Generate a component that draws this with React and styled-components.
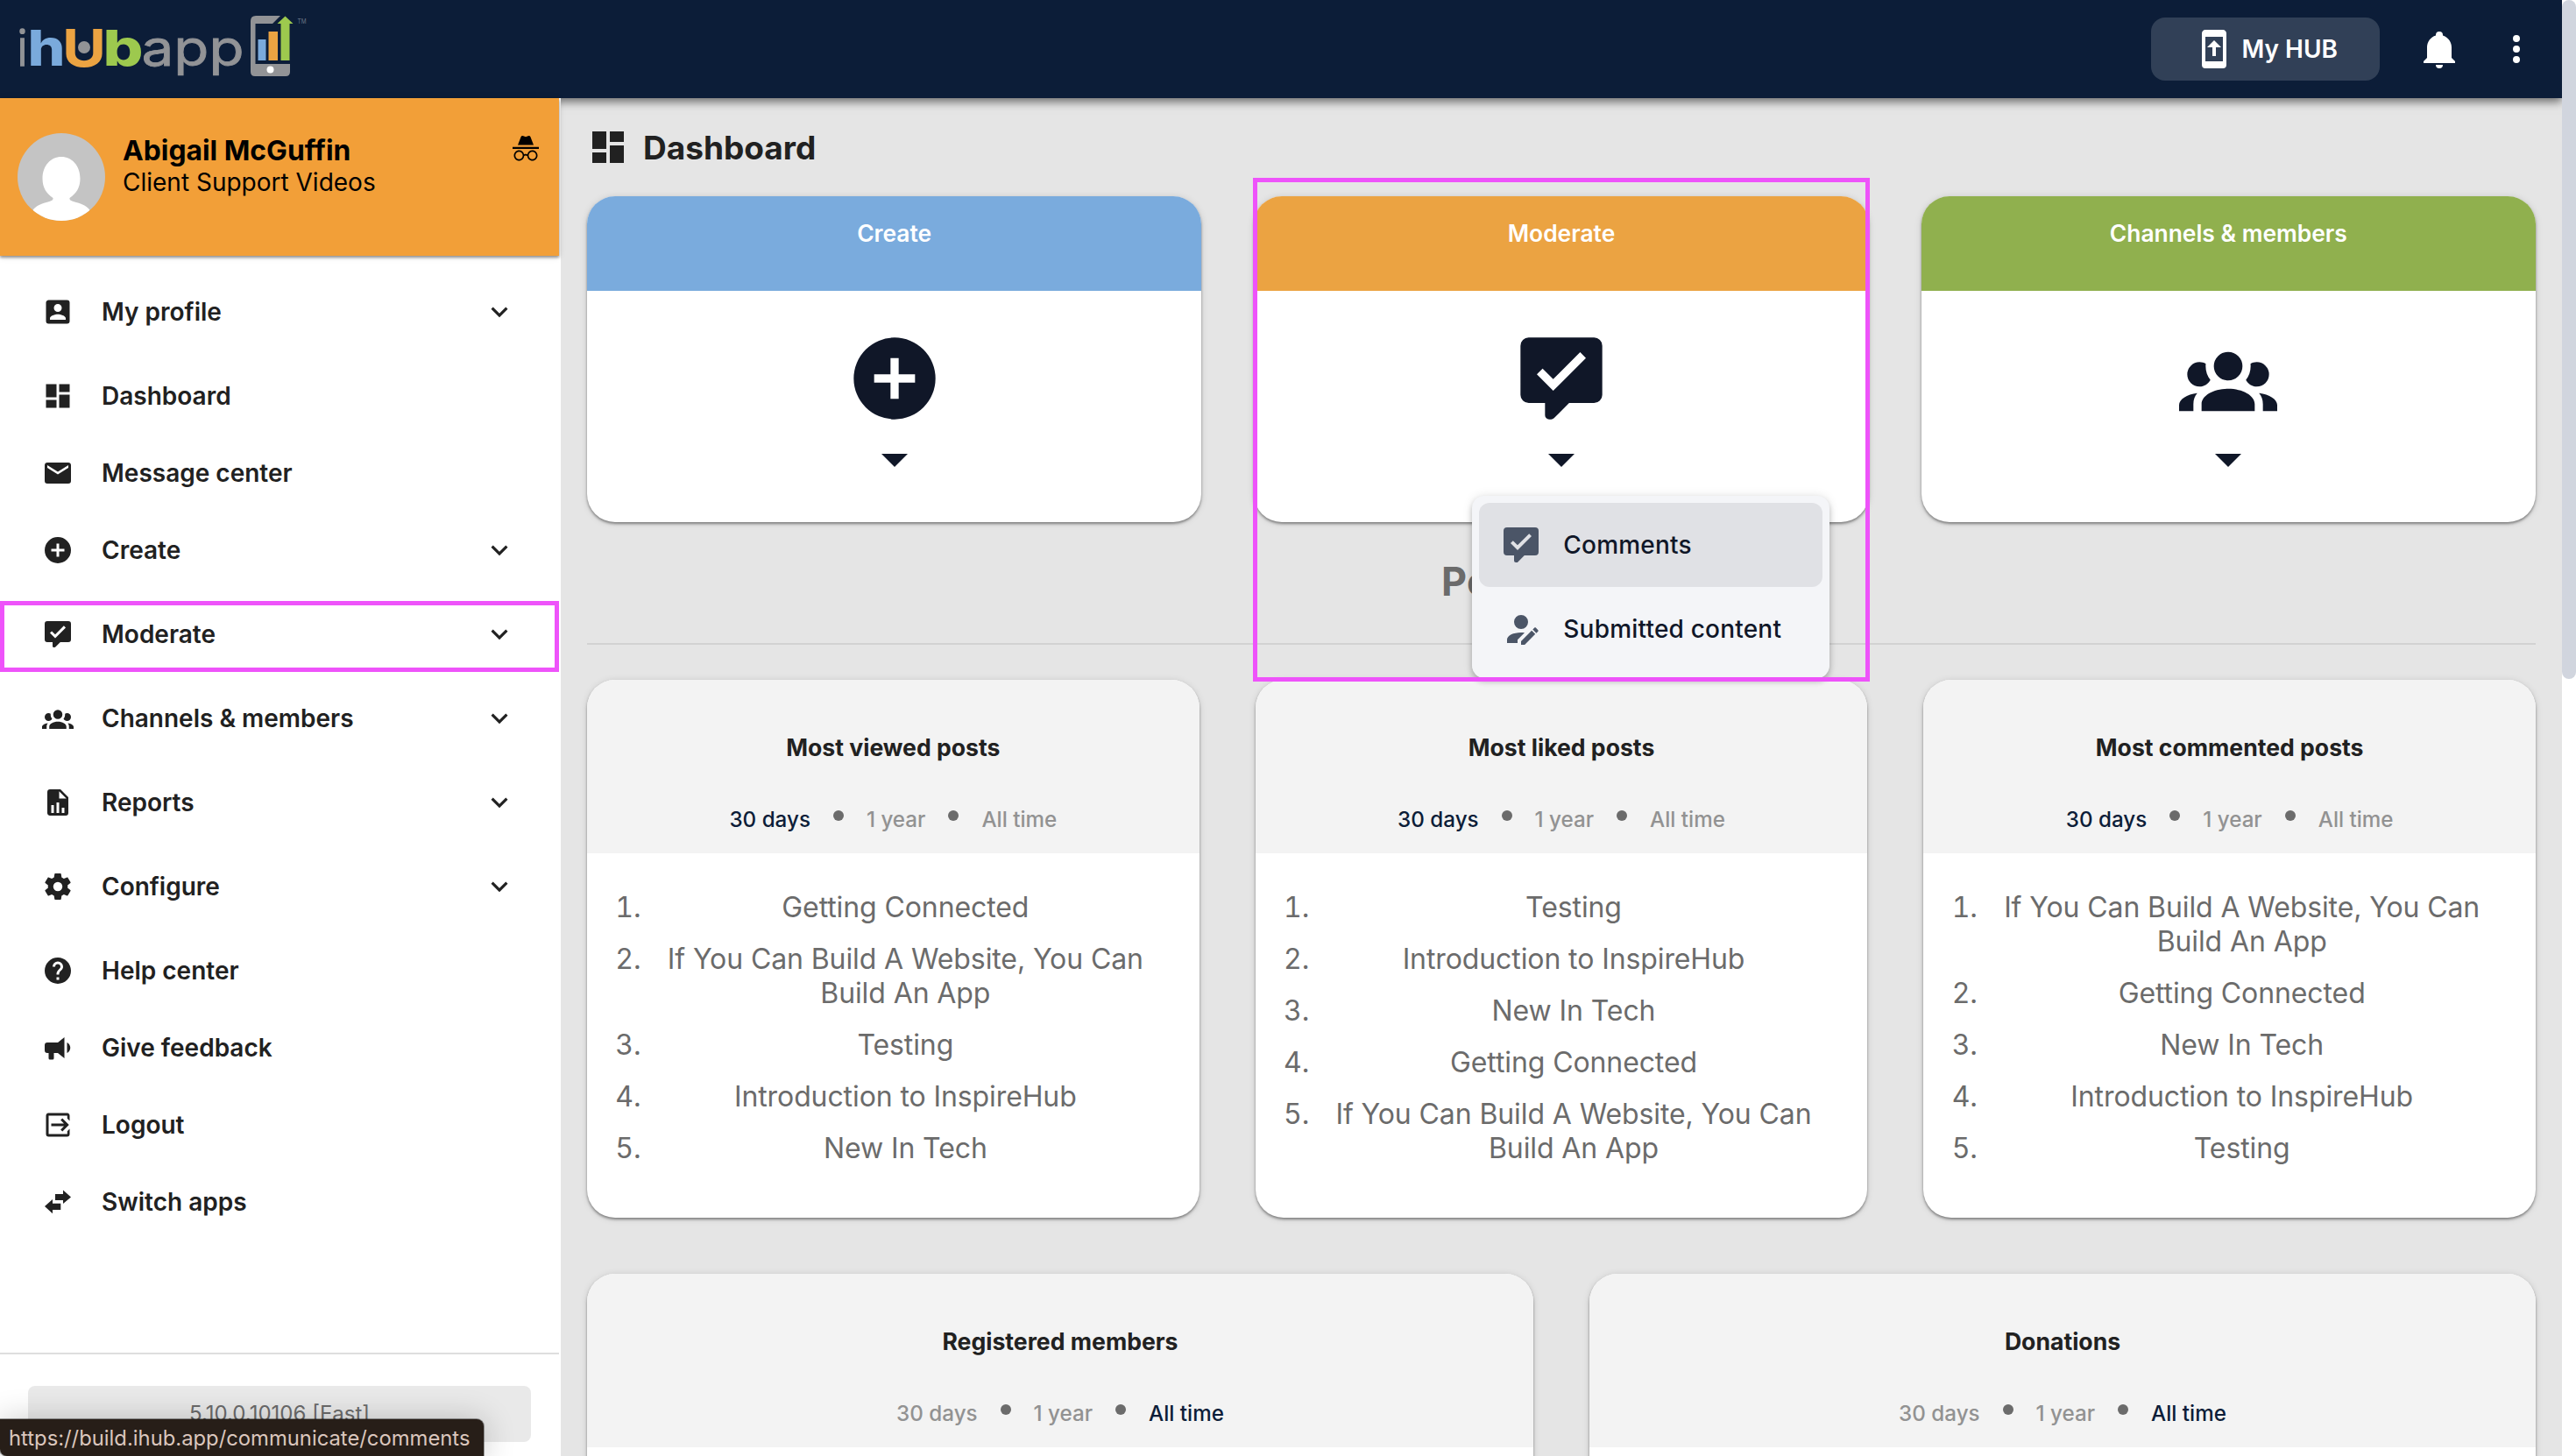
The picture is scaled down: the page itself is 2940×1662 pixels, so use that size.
import styled, { createGlobalStyle, css } from "styled-components";

const GlobalStyle = createGlobalStyle`
  * {
    box-sizing: border-box;
    margin: 0;
    padding: 0;
  }
  body {
    font-family: Inter, "Liberation Sans", sans-serif;
    font-size: 32px;
    color: #212121;
    overflow: hidden;
  }
`;

const icons = {
  account: "M19 3H5C3.9 3 3 3.9 3 5V19A2 2 0 0 0 5 21H19A2 2 0 0 0 21 19V5A2 2 0 0 0 19 3M6 17C6 15 10 13.9 12 13.9S18 15 18 17V18H6M15 9A3 3 0 0 1 12 12A3 3 0 0 1 9 9A3 3 0 0 1 12 6A3 3 0 0 1 15 9Z",
  dashboard: "M13 3V9H21V3M13 21H21V11H13M3 21H11V15H3M3 13H11V3H3V13Z",
  mail: "M20 8L12 13L4 8V6L12 11L20 6M20 4H4C2.89 4 2 4.89 2 6V18A2 2 0 0 0 4 20H20A2 2 0 0 0 22 18V6C22 4.89 21.1 4 20 4Z",
  plus: "M17 13H13V17H11V13H7V11H11V7H13V11H17M12 2A10 10 0 0 0 2 12A10 10 0 0 0 12 22A10 10 0 0 0 22 12A10 10 0 0 0 12 2Z",
  commentCheck: "M20 2H4A2 2 0 0 0 2 4V16A2 2 0 0 0 4 18H8V21A1 1 0 0 0 9 22H9.5C9.75 22 10 21.9 10.2 21.71L13.9 18H20A2 2 0 0 0 22 16V4A2 2 0 0 0 20 2M10 15L6 11L7.41 9.59L10 12.17L16.59 5.58L18 7L10 15Z",
  group: "M12 5.5A3.5 3.5 0 0 1 15.5 9A3.5 3.5 0 0 1 12 12.5A3.5 3.5 0 0 1 8.5 9A3.5 3.5 0 0 1 12 5.5M5 8C5.56 8 6.08 8.15 6.53 8.42C6.38 9.85 6.8 11.27 7.66 12.38C7.16 13.34 6.16 14 5 14A3 3 0 0 1 2 11A3 3 0 0 1 5 8M19 8A3 3 0 0 1 22 11A3 3 0 0 1 19 14C17.84 14 16.84 13.34 16.34 12.38C17.2 11.27 17.62 9.85 17.47 8.42C17.92 8.15 18.44 8 19 8M5.5 18.25C5.5 16.18 8.41 14.5 12 14.5C15.59 14.5 18.5 16.18 18.5 18.25V20H5.5V18.25M0 20V18.5C0 17.11 1.89 15.94 4.45 15.6C3.86 16.28 3.5 17.22 3.5 18.25V20H0M24 20H20.5V18.25C20.5 17.22 20.14 16.28 19.55 15.6C22.11 15.94 24 17.11 24 18.5V20Z",
  report: "M13 9H18.5L13 3.5V9M6 2H14L20 8V20A2 2 0 0 1 18 22H6C4.89 22 4 21.1 4 20V4C4 2.89 4.89 2 6 2M7 20H9V14H7V20M11 20H13V12H11V20M15 20H17V16H15V20Z",
  cog: "M12 15.5A3.5 3.5 0 0 1 8.5 12A3.5 3.5 0 0 1 12 8.5A3.5 3.5 0 0 1 15.5 12A3.5 3.5 0 0 1 12 15.5M19.43 12.97C19.47 12.65 19.5 12.33 19.5 12C19.5 11.67 19.47 11.34 19.43 11L21.54 9.37C21.73 9.22 21.78 8.95 21.66 8.73L19.66 5.27C19.54 5.05 19.27 4.96 19.05 5.05L16.56 6.05C16.04 5.66 15.5 5.32 14.87 5.07L14.5 2.42C14.46 2.18 14.25 2 14 2H10C9.75 2 9.54 2.18 9.5 2.42L9.13 5.07C8.5 5.32 7.96 5.66 7.44 6.05L4.95 5.05C4.73 4.96 4.46 5.05 4.34 5.27L2.34 8.73C2.21 8.95 2.27 9.22 2.46 9.37L4.57 11C4.53 11.34 4.5 11.67 4.5 12C4.5 12.33 4.53 12.65 4.57 12.97L2.46 14.63C2.27 14.78 2.21 15.05 2.34 15.27L4.34 18.73C4.46 18.95 4.73 19.03 4.95 18.95L7.44 17.94C7.96 18.34 8.5 18.68 9.13 18.93L9.5 21.58C9.54 21.82 9.75 22 10 22H14C14.25 22 14.46 21.82 14.5 21.58L14.87 18.93C15.5 18.67 16.04 18.34 16.56 17.94L19.05 18.95C19.27 19.03 19.54 18.95 19.66 18.73L21.66 15.27C21.78 15.05 21.73 14.78 21.54 14.63L19.43 12.97Z",
  help: "M15.07 11.25L14.17 12.17C13.45 12.89 13 13.5 13 15H11V14.5C11 13.39 11.45 12.39 12.17 11.67L13.41 10.41C13.78 10.05 14 9.55 14 9C14 7.89 13.1 7 12 7A2 2 0 0 0 10 9H8A4 4 0 0 1 12 5A4 4 0 0 1 16 9C16 9.88 15.64 10.67 15.07 11.25M13 19H11V17H13M12 2A10 10 0 0 0 2 12A10 10 0 0 0 12 22A10 10 0 0 0 22 12C22 6.47 17.5 2 12 2Z",
  bullhorn: "M12 8H4A2 2 0 0 0 2 10V14A2 2 0 0 0 4 16H5V20A1 1 0 0 0 6 21H8A1 1 0 0 0 9 20V16H12L17 20V4L12 8M21.5 12C21.5 13.71 20.54 15.26 19 16V8C20.53 8.75 21.5 10.3 21.5 12Z",
  logout: "M19 3H5C3.89 3 3 3.89 3 5V19A2 2 0 0 0 5 21H19A2 2 0 0 0 21 19V15L19.2 16.8V19H5V5H19.2V7.2L21 9V5C21 3.89 20.1 3 19 3M15.5 17L20.5 12L15.5 7L14.09 8.41L16.67 11H7V13H16.67L14.09 15.59L15.5 17Z",
  swap: "M16 3L22 8.25L16 13.25V10.7H10V6H16V3M8 10L2 15.25L8 20.75V18H14.2V13.2H8V10Z",
  chevron: "M7.41 8.58L12 13.17L16.59 8.58L18 10L12 16L6 10L7.41 8.58Z",
  caret: "M7 10L12 15L17 10H7Z",
  accountEdit: "M21.7 13.35L20.7 14.35L18.65 12.3L19.65 11.3C19.86 11.09 20.21 11.09 20.42 11.3L21.7 12.58C21.91 12.79 21.91 13.14 21.7 13.35M12 18.94L18.06 12.88L20.11 14.93L14.06 21H12V18.94M12 14C7.58 14 4 15.79 4 18V20H10V18.11L14 14.11C13.34 14.03 12.67 14 12 14M12 4A4 4 0 0 0 8 8A4 4 0 0 0 12 12A4 4 0 0 0 16 8A4 4 0 0 0 12 4Z",
  incognito: "M17.06 13C15.2 13 13.64 14.33 13.24 16.1C12.29 15.69 11.42 15.8 10.76 16.09C10.35 14.31 8.79 13 6.94 13C4.77 13 3 14.79 3 17C3 19.21 4.77 21 6.94 21C9 21 10.68 19.38 10.84 17.32C11.18 17.08 12.07 16.63 13.16 17.34C13.34 19.39 15 21 17.06 21C19.23 21 21 19.21 21 17C21 14.79 19.23 13 17.06 13M6.94 19.86C5.38 19.86 4.13 18.58 4.13 17S5.39 14.14 6.94 14.14C8.5 14.14 9.75 15.42 9.75 17S8.5 19.86 6.94 19.86M17.06 19.86C15.5 19.86 14.25 18.58 14.25 17S15.5 14.14 17.06 14.14C18.62 14.14 19.88 15.42 19.88 17S18.61 19.86 17.06 19.86M22 10.5H2V12H22V10.5M15.53 2.63C15.31 2.14 14.75 1.88 14.22 2.05L12 2.79L9.77 2.05L9.72 2.04C9.19 1.89 8.63 2.17 8.43 2.68L6 9H18L15.56 2.68L15.53 2.63Z",
  phone: "M17 1H7C5.89 1 5 1.89 5 3V21A2 2 0 0 0 7 23H17A2 2 0 0 0 19 21V3C19 1.89 18.1 1 17 1M17 19H7V5H17V19M16 11L12 7L8 11H11V16H13V11H16Z",
  bell: "M21 19V20H3V19L5 17V11C5 7.9 7.03 5.17 10 4.29C10 4.19 10 4.1 10 4A2 2 0 0 1 12 2A2 2 0 0 1 14 4C14 4.1 14 4.19 14 4.29C16.97 5.17 19 7.9 19 11V17L21 19M14 21A2 2 0 0 1 12 23A2 2 0 0 1 10 21",
  dots: "M12 16A2 2 0 0 1 14 18A2 2 0 0 1 12 20A2 2 0 0 1 10 18A2 2 0 0 1 12 16M12 10A2 2 0 0 1 14 12A2 2 0 0 1 12 14A2 2 0 0 1 10 12A2 2 0 0 1 12 10M12 4A2 2 0 0 1 14 6A2 2 0 0 1 12 8A2 2 0 0 1 10 6A2 2 0 0 1 12 4Z",
};

const Svg = styled.svg`
  width: ${(p) => p.$size}px;
  height: ${(p) => p.$size}px;
  flex: none;
  display: block;
  fill: ${(p) => p.$color || "currentColor"};
`;

const Icon = ({ name, size = 36, color }) => (
  <Svg viewBox="0 0 24 24" $size={size} $color={color}>
    <path d={icons[name]} fillRule="evenodd" />
  </Svg>
);

const Screen = styled.div`
  width: 2940px;
  height: 1662px;
  display: flex;
  position: relative;
  overflow: hidden;
  background: #fff;
`;

const Page = styled.div`
  flex: 1;
  display: flex;
  flex-direction: column;
  overflow: hidden;
  background: #e5e5e5;
`;

const ScrollTrack = styled.div`
  width: 16px;
  background: #fff;
`;

const ScrollThumb = styled.div`
  height: 775px;
  border-radius: 8px;
  background: #d1d5de;
`;

const shadow = css`
  box-shadow: 0 2px 3px rgba(0, 0, 0, 0.4), 0 1px 8px rgba(0, 0, 0, 0.12);
`;

/* ---------- top bar ---------- */

const TopBar = styled.header`
  height: 112px;
  flex: none;
  display: flex;
  align-items: center;
  padding: 0 28px 0 10px;
  color: #fff;
  background: #0c1d38;
  box-shadow: 0 4px 10px rgba(0, 0, 0, 0.55);
  position: relative;
  z-index: 1;
`;

const Logo = styled.svg`
  width: 350px;
  height: 112px;
  margin-right: auto;
  font-family: Inter, sans-serif;
`;

const HubButton = styled.button`
  height: 72px;
  display: flex;
  align-items: center;
  gap: 7px;
  padding: 0 48px;
  margin-right: 44px;
  border: 0;
  border-radius: 16px;
  background: #314057;
  color: #fff;
  font: 600 28px Inter, sans-serif;
`;

const BarIcon = styled.div`
  margin-left: ${(p) => p.$gap || 0}px;
`;

/* ---------- sidebar ---------- */

const Columns = styled.div`
  flex: 1;
  display: flex;
  min-height: 0;
`;

const Sidebar = styled.aside`
  width: 640px;
  flex: none;
  display: flex;
  flex-direction: column;
  padding-right: 2px;
  background: #fff;
  position: relative;
  z-index: 2;
`;

const Profile = styled.div`
  height: 180px;
  flex: none;
  display: flex;
  align-items: flex-start;
  gap: 20px;
  padding: 40px 20px;
  background: #f29f38;
  color: #000;
  ${shadow}
`;

const Avatar = styled.svg`
  width: 100px;
  height: 100px;
  border-radius: 50%;
  background: #c4c4c4;
`;

const Who = styled.div`
  flex: 1;
`;

const Name = styled.h1`
  padding-top: 1px;
  font-size: 31.8px;
  line-height: 38px;
  font-weight: 700;
`;

const AppName = styled.p`
  font-size: 28px;
  line-height: 34px;
`;

const Nav = styled.nav`
  flex: 1;
  padding-top: 20px;
`;

const NavItem = styled.div`
  height: 88px;
  display: flex;
  align-items: center;
  gap: 32px;
  padding: 0 49px 0 48px;
  margin-bottom: ${(p) => (p.$expandable ? 8 : 0)}px;
  position: relative;
`;

const NavLabel = styled.span`
  flex: 1;
  font-size: 28px;
  font-weight: 600;
`;

const SideFooter = styled.footer`
  height: 118px;
  padding: 36px 32px 0;
  border-top: 2px solid #dedede;
`;

const Version = styled.div`
  height: 64px;
  display: flex;
  align-items: center;
  justify-content: center;
  padding-bottom: 2px;
  border-radius: 8px;
  background: #e9e9e9;
  color: #6b6b6b;
  font-size: 24px;
`;

const StatusUrl = styled.div`
  position: absolute;
  left: 0;
  bottom: 0;
  z-index: 5;
  height: 42px;
  width: 552px;
  padding-left: 10px;
  line-height: 44px;
  border-radius: 0 8px 0 8px;
  background: #271e18;
  color: #dac6bd;
  font-size: 23.8px;
  white-space: nowrap;
  box-shadow: 0 0 0 1px rgba(0, 0, 0, 0.35), 0 2px 36px rgba(0, 0, 0, 0.24);
`;

/* pink annotation frame */
const Outline = styled.div`
  position: absolute;
  top: ${(p) => p.$top}px;
  left: ${(p) => p.$left}px;
  width: ${(p) => p.$w}px;
  height: ${(p) => p.$h}px;
  border: 5px solid #ee53fa;
  z-index: 4;
  pointer-events: none;
`;

/* ---------- main ---------- */

const Main = styled.main`
  flex: 1;
  padding: 32px 30px 0;
`;

const PageTitle = styled.h2`
  height: 48px;
  display: flex;
  align-items: center;
  gap: 16px;
  margin-bottom: 32px;
  font-size: 37px;
  font-weight: 700;
`;

const CardRow = styled.div`
  display: grid;
  grid-template-columns: repeat(${(p) => p.$cols}, 1fr);
  gap: ${(p) => p.$gap}px;
  margin-bottom: ${(p) => p.$below || 0}px;
`;

const ActionCard = styled.section`
  height: 372px;
  border-radius: 32px;
  background: #fff;
  position: relative;
  z-index: ${(p) => (p.$open ? 3 : "auto")};
  ${shadow}
`;

const ActionHead = styled.h3`
  height: 108px;
  padding-top: 26px;
  border-radius: 32px 32px 0 0;
  background: ${(p) => p.$color};
  color: #fff;
  font-size: 26.4px;
  line-height: 32px;
  font-weight: 600;
  text-align: center;
`;

const ActionBody = styled.div`
  display: flex;
  flex-direction: column;
  align-items: center;
  padding-top: 44px;
  color: #101728;
`;

const Menu = styled.ul`
  position: absolute;
  top: 342px;
  left: 249px;
  width: 408px;
  padding: 8px;
  border-radius: 14px;
  background: #f4f5f8;
  list-style: none;
  z-index: 3;
  box-shadow: 0 4px 6px rgba(0, 0, 0, 0.22), 0 0 12px rgba(0, 0, 0, 0.1);
`;

const MenuItem = styled.li`
  height: 96px;
  display: flex;
  align-items: center;
  gap: 24px;
  padding-left: 24px;
  border-radius: 12px;
  background: ${(p) => (p.$active ? "#e0e1e5" : "transparent")};
  color: #101728;
  font-size: 28px;
  font-weight: 500;
  letter-spacing: 0.2px;
`;

const SectionTitle = styled.h2`
  margin-top: 41px;
  padding-bottom: 43px;
  border-bottom: 2px solid #d2d2d2;
  margin-bottom: 40px;
  color: #6b6b6b;
  font-size: 44.8px;
  line-height: 54px;
  font-weight: 700;
  letter-spacing: 0.5px;
  text-align: center;
`;

const StatCard = styled.section`
  border-radius: 32px;
  background: #fff;
  min-height: ${(p) => p.$min || 614}px;
  ${shadow}
`;

const StatHead = styled.div`
  height: 198px;
  padding-top: 61px;
  border-radius: 32px 32px 0 0;
  background: #f3f3f3;
  text-align: center;
`;

const StatTitle = styled.h3`
  margin-bottom: 53px;
  font-size: 26.6px;
  line-height: 32px;
  font-weight: 700;
`;

const Tabs = styled.div`
  display: flex;
  justify-content: center;
  gap: 26px;
  line-height: 28px;
`;

const Tab = styled.span`
  font-size: 24.2px;
  font-weight: 500;
  color: ${(p) => (p.$active ? "#0c1d38" : "#929292")};
`;

const TabDot = styled.i`
  width: 12px;
  height: 12px;
  margin-top: 3px;
  border-radius: 50%;
  background: #6b6b6b;
`;

const PostList = styled.ol`
  padding: 42px 42px 0 70px;
  color: #6b6b6b;
  font-size: 32px;
  line-height: 39px;
  letter-spacing: -0.1px;
  text-align: center;
`;

const Post = styled.li`
  margin-bottom: 20px;
`;

const navItems = [
  { icon: "account", label: "My profile", expandable: true },
  { icon: "dashboard", label: "Dashboard" },
  { icon: "mail", label: "Message center" },
  { icon: "plus", label: "Create", expandable: true },
  { icon: "commentCheck", label: "Moderate", expandable: true, outlined: true },
  { icon: "group", label: "Channels & members", expandable: true },
  { icon: "report", label: "Reports", expandable: true },
  { icon: "cog", label: "Configure", expandable: true },
  { icon: "help", label: "Help center" },
  { icon: "bullhorn", label: "Give feedback" },
  { icon: "logout", label: "Logout" },
  { icon: "swap", label: "Switch apps" },
];

const website = "If You Can Build A Website, You Can Build An App";

const postCards = [
  {
    title: "Most viewed posts",
    posts: ["Getting Connected", website, "Testing", "Introduction to InspireHub", "New In Tech"],
  },
  {
    title: "Most liked posts",
    posts: ["Testing", "Introduction to InspireHub", "New In Tech", "Getting Connected", website],
  },
  {
    title: "Most commented posts",
    posts: [website, "Getting Connected", "New In Tech", "Introduction to InspireHub", "Testing"],
  },
];

const BrandLogo = () => (
  <Logo viewBox="10 0 350 112">
    <g fill="#929396" stroke="#929396">
      <text x="19.5" y="75" fontSize="57" fontWeight="300" strokeWidth="1.6" textLength="12" lengthAdjust="spacingAndGlyphs">i</text>
      <text x="161.5" y="75" fontSize="57" fontWeight="400" strokeWidth="0.8" textLength="117" lengthAdjust="spacingAndGlyphs">app</text>
    </g>
    <text x="31.5" y="75" fill="#7aaadc" fontSize="57" fontWeight="800" textLength="43" lengthAdjust="spacingAndGlyphs">h</text>
    <text x="71" y="75.5" fill="#eba342" fontSize="59" fontWeight="700" textLength="50" lengthAdjust="spacingAndGlyphs">U</text>
    <circle cx="96" cy="54" r="7" fill="#929396" />
    <text x="117.5" y="75" fill="#9dc94e" fontSize="57" fontWeight="800" textLength="46" lengthAdjust="spacingAndGlyphs">b</text>
    <path fill="#929396" d="M292 18H320L311 27H291.5V73H331V82Q331 87 326 87H291Q286 87 286 82V24Q286 18 292 18Z" />
    <circle cx="308.5" cy="79.5" r="4" fill="#fff" />
    <path fill="#7aaadc" d="M294.5 45H303.5V69H294.5Z" />
    <path fill="#eba342" d="M306.5 36H317V69H306.5Z" />
    <path fill="#9dc94e" d="M325.5 18.5L334.5 27H330.5V69H320.5V27H316.5Z" />
    <text x="339.5" y="27" fill="#6a7283" fontSize="8" textLength="10" lengthAdjust="spacingAndGlyphs">TM</text>
  </Logo>
);

const PeriodTabs = ({ active }) => (
  <Tabs>
    <Tab $active={active === 0}>30 days</Tab>
    <TabDot />
    <Tab $active={active === 1}>1 year</Tab>
    <TabDot />
    <Tab $active={active === 2}>All time</Tab>
  </Tabs>
);

const Action = ({ title, color, icon, open, children }) => (
  <ActionCard $open={open}>
    <ActionHead $color={color}>{title}</ActionHead>
    <ActionBody>
      <Icon name={icon} size={112} />
      <Icon name="caret" size={72} />
    </ActionBody>
    {children}
  </ActionCard>
);

export default function App() {
  return (
    <>
      <GlobalStyle />
      <Screen>
        <Page>
          <TopBar>
            <BrandLogo />
            <HubButton>
              <Icon name="phone" size={48} />
              My HUB
            </HubButton>
            <BarIcon>
              <Icon name="bell" size={48} />
            </BarIcon>
            <BarIcon $gap={40}>
              <Icon name="dots" size={48} />
            </BarIcon>
          </TopBar>
          <Columns>
            <Sidebar>
              <Profile>
                <Avatar viewBox="0 0 100 100">
                  <path
                    fill="#fff"
                    d="M50 27C62 27 71.500 37 71.500 52C71.500 62 67 69 59.500 74C59 77 62 77.500 67 79C75 81 80 84 82.500 88L70 100H30L17.500 88C20 84 25 81 33 79C38 77.500 41 77 40.500 74C33 69 28.500 62 28.500 52C28.500 37 38 27 50 27Z"
                  />
                </Avatar>
                <Who>
                  <Name>Abigail McGuffin</Name>
                  <AppName>Client Support Videos</AppName>
                </Who>
                <Icon name="incognito" />
              </Profile>
              <Nav>
                {navItems.map((item) => (
                  <NavItem key={item.label} $expandable={item.expandable}>
                    <Icon name={item.icon} />
                    <NavLabel>{item.label}</NavLabel>
                    {item.expandable && <Icon name="chevron" size={38} />}
                    {item.outlined && <Outline $top={6} $left={0} $w={638} $h={81} />}
                  </NavItem>
                ))}
              </Nav>
              <SideFooter>
                <Version>5.10.0.10106 [East]</Version>
              </SideFooter>
            </Sidebar>
            <Main>
              <PageTitle>
                <Icon name="dashboard" size={48} />
                Dashboard
              </PageTitle>
              <CardRow $cols={3} $gap={60}>
                <Action title="Create" color="#7aabdd" icon="plus" />
                <Action title="Moderate" color="#eba342" icon="commentCheck" open>
                  <Menu>
                    <MenuItem $active>
                      <Icon name="commentCheck" size={48} color="#4b5567" />
                      Comments
                    </MenuItem>
                    <MenuItem>
                      <Icon name="accountEdit" size={48} color="#4b5567" />
                      Submitted content
                    </MenuItem>
                  </Menu>
                  <Outline $top={-21} $left={-1} $w={704} $h={575} />
                </Action>
                <Action title="Channels & members" color="#90b04e" icon="group" />
              </CardRow>
              <SectionTitle>Post reports</SectionTitle>
              <CardRow $cols={3} $gap={64} $below={64}>
                {postCards.map((card) => (
                  <StatCard key={card.title}>
                    <StatHead>
                      <StatTitle>{card.title}</StatTitle>
                      <PeriodTabs active={0} />
                    </StatHead>
                    <PostList>
                      {card.posts.map((post) => (
                        <Post key={post}>{post}</Post>
                      ))}
                    </PostList>
                  </StatCard>
                ))}
              </CardRow>
              <CardRow $cols={2} $gap={64}>
                {["Registered members", "Donations"].map((title) => (
                  <StatCard key={title} $min={500}>
                    <StatHead>
                      <StatTitle>{title}</StatTitle>
                      <PeriodTabs active={2} />
                    </StatHead>
                  </StatCard>
                ))}
              </CardRow>
            </Main>
          </Columns>
        </Page>
        <ScrollTrack>
          <ScrollThumb />
        </ScrollTrack>
        <StatusUrl>https://build.ihub.app/communicate/comments</StatusUrl>
      </Screen>
    </>
  );
}
